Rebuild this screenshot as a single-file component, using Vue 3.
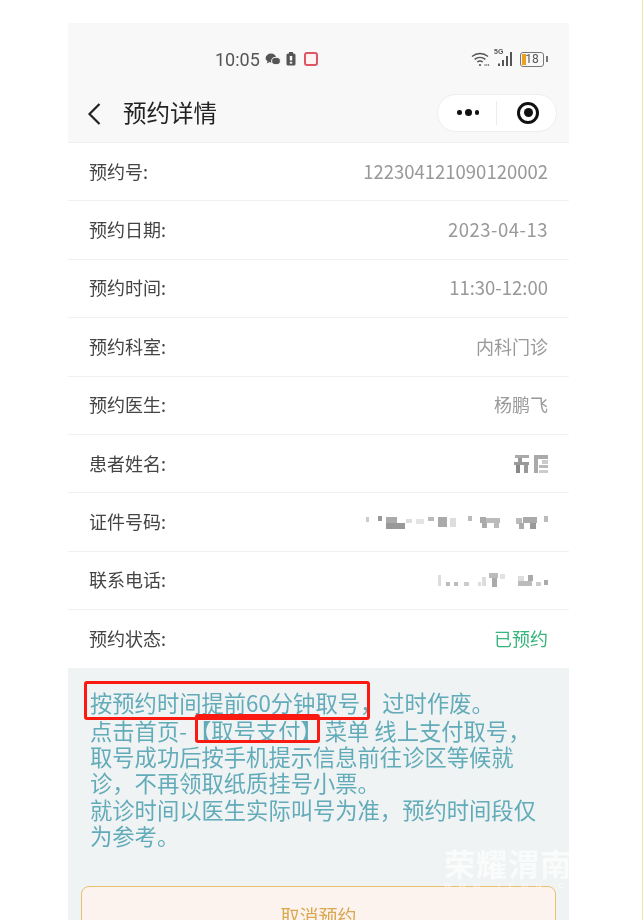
<template>
  <div class="page">
    <div class="phone">
      <header class="top">
        <div class="status">
          <div class="status-left">
            <span class="clock">10:05</span>
            <svg class="wechat" viewBox="0 0 16 13" width="16" height="13">
              <ellipse cx="6" cy="5" rx="5.4" ry="4.4" fill="#555" />
              <path d="M2.5 8l-.6 2.4 2.6-1.4z" fill="#555" />
              <ellipse cx="11" cy="8" rx="4.4" ry="3.7" fill="#555" stroke="#f8f8f8" stroke-width="1" />
            </svg>
            <svg class="charge" viewBox="0 0 10 14" width="10" height="14">
              <rect x="3" y="0" width="4" height="2" fill="#555" />
              <rect x="0.5" y="1.5" width="9" height="12" rx="1.5" fill="#555" />
              <rect x="3.8" y="4" width="2.4" height="4.5" fill="#f8f8f8" />
              <rect x="3.8" y="9.8" width="2.4" height="1.8" fill="#f8f8f8" />
            </svg>
            <span class="red-icon"></span>
          </div>
          <div class="status-right">
            <svg viewBox="0 0 20 16" width="20" height="16" fill="none" stroke="#555" stroke-width="1.5">
              <path d="M1 5.5a12.5 12.5 0 0 1 16 0" />
              <path d="M3.6 8.3a8.6 8.6 0 0 1 10.8 0" />
              <path d="M6.2 11a4.6 4.6 0 0 1 5.6 0" />
              <circle cx="9" cy="14" r="1.1" fill="#555" stroke="none" />
              <path d="M13.5 14h5" stroke-width="1.6" stroke-dasharray="1 .8" />
            </svg>
            <div class="signal">
              <span class="five-g">5G</span>
              <svg viewBox="0 0 16 14" width="16" height="14" fill="#555">
                <rect x="0" y="11.5" width="2" height="2.5" />
                <rect x="4" y="8" width="2" height="6" />
                <rect x="8" y="4" width="2" height="10" />
                <rect x="12" y="0" width="2" height="14" />
              </svg>
            </div>
            <div class="battery">
              <span class="battery-body"><i class="battery-level"></i>18</span>
              <span class="battery-tip"></span>
            </div>
          </div>
        </div>
        <nav class="nav">
          <svg class="back" viewBox="0 0 14 24" width="14" height="24" fill="none" stroke="#222" stroke-width="2.2">
            <path d="M12.5 2L2.5 12l10 10" />
          </svg>
          <h1 class="title">预约详情</h1>
          <div class="capsule">
            <div class="dots"><i></i><i class="big"></i><i></i></div>
            <span class="capsule-line"></span>
            <div class="target"><i></i></div>
          </div>
        </nav>
      </header>

      <section class="rows">
        <div v-for="row in rows" :key="row.label" class="row">
          <span class="label">{{ row.label }}</span>
          <svg v-if="row.blocks" :width="row.w" :height="row.h" :viewBox="`0 0 ${row.w} ${row.h}`">
            <filter :id="`blur-${row.w}`"><feGaussianBlur stdDeviation="0.7" /></filter>
            <g :filter="`url(#blur-${row.w})`">
              <rect
                v-for="(b, i) in row.blocks"
                :key="i"
                :x="b[0]"
                :y="b[1]"
                :width="b[2]"
                :height="b[3]"
                :fill="b[4]"
              />
            </g>
          </svg>
          <span v-else class="value" :class="[row.kind]">{{ row.value }}</span>
        </div>
      </section>

      <section class="tips">
        <div class="mark mark-one"></div>
        <div class="mark mark-two"></div>
        <p class="first">按预约时间提前60分钟取号，过时作废。</p>
        <p>点击首页<span class="wide">-</span>【取号支付<span class="wide">】</span>菜单 线上支付取号，</p>
        <p>取号成功后按手机提示信息前往诊区等候就</p>
        <p>诊，不再领取纸质挂号小票。</p>
        <p>就诊时间以医生实际叫号为准，预约时间段仅</p>
        <p>为参考。</p>
        <button class="cancel">取消预约</button>
      </section>

      <div class="watermark">
        <div class="wm-big">荣耀渭南</div>
        <div class="wm-small">WWW.YEWN.CN</div>
      </div>
    </div>
  </div>
</template>

<script setup>
const nameBlocks = [
  [1, 0, 14, 3, '#aaa'], [4, 3, 4, 5, '#999'], [0, 7, 15, 3, '#999'], [2, 10, 4, 8, '#888'], [10, 10, 4, 8, '#999'],
  [20, 0, 14, 4, '#aaa'], [20, 4, 4, 14, '#aaa'], [28, 5, 6, 4, '#ccc'], [25, 10, 9, 3, '#bbb'], [25, 15, 9, 3, '#ccc']
]
const idBlocks = [
  [0, 3, 3, 5, '#ccc'], [12, 2, 4, 5, '#999'], [20, 3, 11, 6, '#aaa'], [20, 9, 19, 6, '#999'], [40, 5, 6, 4, '#ddd'],
  [50, 5, 8, 5, '#e4e4e4'], [62, 3, 6, 4, '#bbb'], [72, 3, 9, 10, '#aaa'], [84, 4, 6, 9, '#ddd'], [102, 2, 4, 5, '#bbb'],
  [114, 3, 6, 6, '#aaa'], [120, 4, 14, 5, '#bbb'], [116, 9, 5, 5, '#aaa'], [128, 9, 5, 5, '#bbb'], [150, 4, 6, 6, '#bbb'],
  [157, 3, 14, 6, '#aaa'], [153, 9, 5, 6, '#aaa'], [164, 9, 6, 6, '#999'], [178, 2, 4, 6, '#bbb']
]
const phoneBlocks = [
  [0, 3, 3, 11, '#ddd'], [8, 10, 4, 4, '#bbb'], [16, 10, 4, 4, '#bbb'], [26, 10, 5, 4, '#ccc'], [40, 10, 3, 4, '#ddd'],
  [44, 5, 4, 9, '#ddd'], [51, 1, 9, 5, '#bbb'], [54, 6, 5, 9, '#aaa'], [62, 2, 5, 5, '#e2e2e2'],
  [80, 4, 6, 5, '#ddd'], [80, 9, 14, 5, '#bbb'], [90, 3, 5, 6, '#aaa'], [98, 10, 5, 4, '#ccc'], [106, 8, 4, 5, '#aaa']
]

const rows = [
  { label: '预约号:', value: '122304121090120002', kind: 'num' },
  { label: '预约日期:', value: '2023-04-13', kind: 'num date' },
  { label: '预约时间:', value: '11:30-12:00', kind: 'num' },
  { label: '预约科室:', value: '内科门诊' },
  { label: '预约医生:', value: '杨鹏飞' },
  { label: '患者姓名:', w: 34, h: 18, blocks: nameBlocks },
  { label: '证件号码:', w: 182, h: 16, blocks: idBlocks },
  { label: '联系电话:', w: 110, h: 16, blocks: phoneBlocks },
  { label: '预约状态:', value: '已预约', kind: 'done' }
]
</script>

<style scoped>
.page {
  position: relative;
  height: 920px;
  padding: 23px 0 0 68px;
  box-sizing: border-box;
  overflow: hidden;
  background: #fff;
  border-right: 1px solid #e6eba0;
  font-family: "Noto Sans CJK SC", "Noto Sans", sans-serif;
}

.phone {
  position: relative;
  width: 501px;
}

/* Header */
.top {
  height: 120px;
  background: #f8f8f8;
  border-bottom: 1px solid #f0f0f0;
  box-sizing: border-box;
  filter: blur(0.35px);
}

.status {
  height: 72px;
  padding: 0 21px 0 147px;
  display: flex;
  align-items: center;
  justify-content: space-between;
}

.status-left,
.status-right {
  display: flex;
  align-items: center;
}

.status-left {
  gap: 5px;
}

.status-right {
  gap: 4px;
}

.clock {
  font-family: Roboto, sans-serif;
  font-size: 18px;
  color: #555;
}

.red-icon {
  width: 14px;
  height: 14px;
  margin-left: 3px;
  border: 2.5px solid #de5666;
  border-radius: 3px;
  box-sizing: border-box;
  background: #fdf3f3;
}

.signal {
  display: flex;
  align-items: flex-end;
  position: relative;
  padding-left: 3px;
}

.five-g {
  position: absolute;
  left: -1px;
  top: -4px;
  font-family: "Liberation Sans", sans-serif;
  font-size: 7px;
  font-weight: 700;
  color: #555;
}

.battery {
  display: flex;
  align-items: center;
  gap: 2px;
  margin-left: 2px;
}

.battery-body {
  position: relative;
  width: 24px;
  height: 15px;
  border: 1.5px solid #777;
  border-radius: 3px;
  box-sizing: border-box;
  font-family: Roboto, sans-serif;
  font-size: 12px;
  line-height: 12px;
  text-align: center;
  color: #555;
}

.battery-level {
  position: absolute;
  left: 1px;
  top: 1px;
  bottom: 1px;
  width: 4px;
  background: #f0a020;
}

.battery-tip {
  width: 2px;
  height: 6px;
  background: #777;
}

.nav {
  height: 47px;
  padding: 0 12px 0 19px;
  display: flex;
  align-items: center;
  margin-top: -5px;
}

.title {
  margin: 0 0 0 22px;
  padding-bottom: 4px;
  flex: 1;
  font-size: 23.5px;
  font-weight: 400;
  color: #222;
}

.capsule {
  width: 120px;
  height: 38px;
  margin-bottom: 2px;
  background: #fff;
  border: 1px solid #eeeeee;
  border-radius: 20px;
  box-sizing: border-box;
  display: flex;
  align-items: center;
}

.dots {
  flex: 1;
  padding-left: 2px;
  display: flex;
  align-items: center;
  justify-content: center;
  gap: 3px;
}

.dots i {
  width: 4.5px;
  height: 4.5px;
  border-radius: 50%;
  background: #111;
}

.dots i.big {
  width: 7px;
  height: 7px;
}

.capsule-line {
  width: 1px;
  height: 24px;
  background: #ececec;
}

.target {
  flex: 1;
  padding-left: 3px;
  display: flex;
}

.target i {
  position: relative;
  width: 22px;
  height: 22px;
  margin: auto;
  border: 3px solid #111;
  border-radius: 50%;
  box-sizing: border-box;
  display: flex;
}

.target i::after {
  content: "";
  width: 9px;
  height: 9px;
  margin: auto;
  border-radius: 50%;
  background: #111;
}

/* Rows */
.rows {
  background: #fff;
  filter: blur(0.35px);
}

.row {
  height: 58.4px;
  padding: 0 21px;
  box-sizing: border-box;
  display: flex;
  align-items: center;
  justify-content: space-between;
  border-bottom: 1px solid #f1f1f1;
}

.row:last-child {
  height: 57.4px;
  border-bottom: none;
}

.label {
  padding-bottom: 2px;
  font-size: 18px;
  color: #444;
}

.value {
  padding-bottom: 2px;
  font-size: 18px;
  color: #999;
}

.value.num {
  font-size: 18.5px;
}

.value.date {
  letter-spacing: 0.5px;
}

.value.done {
  color: #37b57c;
}

/* Notice */
.tips {
  position: relative;
  height: 300px;
  padding: 21px 12px 0 22px;
  box-sizing: border-box;
  background: #f0f3f4;
}

.tips p {
  margin: 0;
  font-size: 22.3px;
  line-height: 26.3px;
  color: #62abb8;
  white-space: nowrap;
  filter: blur(0.35px);
}

.tips p.first {
  margin-bottom: 2px;
}

.wide {
  letter-spacing: 2px;
}

.mark {
  position: absolute;
  z-index: 1;
  border: 3px solid #fb1a12;
  border-radius: 3px;
  box-sizing: border-box;
}

.mark-one {
  left: 16px;
  top: 13px;
  width: 286px;
  height: 39px;
}

.mark-two {
  left: 127px;
  top: 46px;
  width: 125px;
  height: 29px;
}

.cancel {
  display: block;
  width: 475px;
  height: 70px;
  margin: 38px 0 0 -9px;
  background: #fdf3ee;
  border: 1px solid #e8c06e;
  border-radius: 8px;
  font-family: inherit;
  font-size: 19px;
  color: #d9a850;
  padding: 0 0 12px;
  filter: blur(0.3px);
}

.watermark {
  position: absolute;
  left: 376px;
  top: 822px;
  width: 200px;
  color: rgba(255, 255, 255, 0.7);
}

.wm-big {
  font-size: 31px;
  line-height: 36px;
  font-weight: 700;
  letter-spacing: 1px;
  white-space: nowrap;
}

.wm-small {
  font-family: "Liberation Sans", sans-serif;
  font-size: 8px;
  line-height: 10px;
  letter-spacing: 7px;
  white-space: nowrap;
}
</style>
